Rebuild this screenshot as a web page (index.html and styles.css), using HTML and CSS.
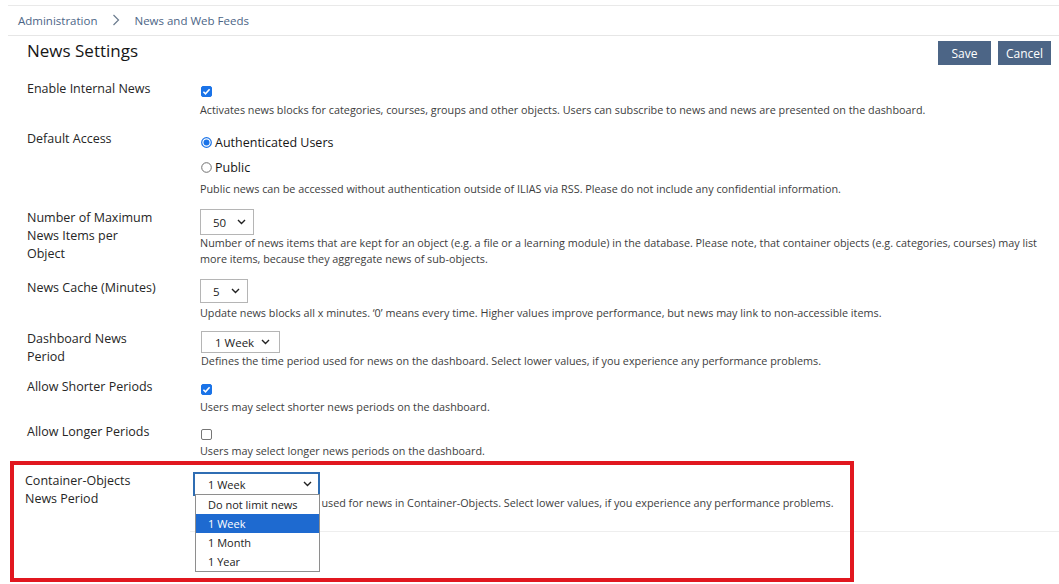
FILE: index.html
```html
<!DOCTYPE html>
<html lang="en">
<head>
<meta charset="utf-8">
<title>News Settings</title>
<link rel="stylesheet" href="styles.css">
</head>
<body>
<nav class="crumbs">
  <span class="crumb">Administration</span>
  <svg class="crumb-sep" width="8" height="12" viewBox="0 0 8 12"><path d="M1.5 1 L6.5 6 L1.5 11" fill="none" stroke="#6b7b8e" stroke-width="1.2"/></svg>
  <span class="crumb">News and Web Feeds</span>
</nav>

<div class="header">
  <h1 class="title">News Settings</h1>
  <div class="buttons">
    <button class="btn">Save</button>
    <button class="btn">Cancel</button>
  </div>
</div>

<div class="form">
  <div class="row r1">
    <div class="label">Enable Internal News</div>
    <div class="field">
      <div class="cb-line"><span class="cb checked"><svg width="11" height="11" viewBox="0 0 11 11"><path d="M2.4 5.7 L4.5 7.8 L8.6 3.3" fill="none" stroke="#fff" stroke-width="1.6"/></svg></span></div>
      <div class="desc">Activates news blocks for categories, courses, groups and other objects. Users can subscribe to news and news are presented on the dashboard.</div>
    </div>
  </div>

  <div class="row r2">
    <div class="label">Default Access</div>
    <div class="field">
      <div class="radio-line"><svg class="radio" width="11" height="11" viewBox="0 0 11 11"><circle cx="5.5" cy="5.5" r="4.8" fill="#fff" stroke="#1a73e8" stroke-width="1.2"/><circle cx="5.5" cy="5.5" r="3" fill="#1a73e8"/></svg><span class="radio-text">Authenticated Users</span></div>
      <div class="radio-line"><svg class="radio" width="11" height="11" viewBox="0 0 11 11"><circle cx="5.5" cy="5.5" r="4.8" fill="#fff" stroke="#6f6f6f" stroke-width="1"/></svg><span class="radio-text">Public</span></div>
      <div class="desc d-tight">Public news can be accessed without authentication outside of ILIAS via RSS. Please do not include any confidential information.</div>
    </div>
  </div>

  <div class="row r3">
    <div class="label">Number of Maximum News Items per Object</div>
    <div class="field">
      <div class="select s50"><span>50</span><svg class="chev" width="9" height="6" viewBox="0 0 9 6"><path d="M1 1 L4.5 4.5 L8 1" fill="none" stroke="#222" stroke-width="1.4"/></svg></div>
      <div class="desc">Number of news items that are kept for an object (e.g. a file or a learning module) in the database. Please note, that container objects (e.g. categories, courses) may list more items, because they aggregate news of sub-objects.</div>
    </div>
  </div>

  <div class="row r4">
    <div class="label">News Cache (Minutes)</div>
    <div class="field">
      <div class="select s5"><span>5</span><svg class="chev" width="9" height="6" viewBox="0 0 9 6"><path d="M1 1 L4.5 4.5 L8 1" fill="none" stroke="#222" stroke-width="1.4"/></svg></div>
      <div class="desc d-gap">Update news blocks all x minutes. ‘0’ means every time. Higher values improve performance, but news may link to non-accessible items.</div>
    </div>
  </div>

  <div class="row r5">
    <div class="label">Dashboard News Period</div>
    <div class="field">
      <div class="select sweek"><span>1 Week</span><svg class="chev" width="9" height="6" viewBox="0 0 9 6"><path d="M1 1 L4.5 4.5 L8 1" fill="none" stroke="#222" stroke-width="1.4"/></svg></div>
      <div class="desc">Defines the time period used for news on the dashboard. Select lower values, if you experience any performance problems.</div>
    </div>
  </div>

  <div class="row r6">
    <div class="label">Allow Shorter Periods</div>
    <div class="field">
      <div class="cb-line cb21"><span class="cb checked"><svg width="11" height="11" viewBox="0 0 11 11"><path d="M2.4 5.7 L4.5 7.8 L8.6 3.3" fill="none" stroke="#fff" stroke-width="1.6"/></svg></span></div>
      <div class="desc">Users may select shorter news periods on the dashboard.</div>
    </div>
  </div>

  <div class="row r7">
    <div class="label">Allow Longer Periods</div>
    <div class="field">
      <div class="cb-line cb20"><span class="cb"></span></div>
      <div class="desc">Users may select longer news periods on the dashboard.</div>
    </div>
  </div>

  <div class="row r8">
    <div class="label">Container-Objects News Period</div>
    <div class="field">
      <div class="select-wrap">
        <div class="select sfocus"><span>1 Week</span><svg class="chev" width="9" height="6" viewBox="0 0 9 6"><path d="M1 1 L4.5 4.5 L8 1" fill="none" stroke="#222" stroke-width="1.4"/></svg></div>
        <ul class="dropdown">
          <li>Do not limit news</li>
          <li class="sel">1 Week</li>
          <li>1 Month</li>
          <li>1 Year</li>
        </ul>
      </div>
      <div class="desc d-neg">Defines the time period used for news in Container-Objects. Select lower values, if you experience any performance problems.</div>
    </div>
  </div>

  <div class="form-footer"></div>
</div>

<div class="annotation"></div>
</body>
</html>
```

FILE: styles.css
```css
html, body {
  margin: 0;
  padding: 0;
  background: #fff;
}
body {
  font-family: "Open Sans", "Noto Sans", sans-serif;
  color: #1f1f1f;
  position: relative;
  width: 1059px;
  height: 584px;
  overflow: hidden;
}

.crumbs {
  margin: 5px 0 0 8px;
  height: 28px;
  border-top: 1px solid #e9e9e9;
  border-bottom: 1px solid #e6e6e6;
  display: flex;
  align-items: center;
  padding: 0 0 1px 10px;
  font-size: 11.5px;
  color: #4c6586;
}
.crumb-sep {
  margin: 0 14px 0 15px;
}

.header {
  display: flex;
  justify-content: space-between;
  align-items: flex-start;
  padding: 5px 8px 0 27px;
}
.title {
  margin: 0;
  font-size: 17px;
  font-weight: 400;
  line-height: 20px;
  color: #161616;
}
.buttons {
  display: flex;
  gap: 7px;
}
.btn {
  width: 53px;
  height: 24px;
  border: none;
  background: #4c6586;
  color: #fff;
  font-family: inherit;
  font-size: 12px;
  padding: 0;
}

.form {
  display: flex;
  flex-direction: column;
}
.row {
  display: grid;
  grid-template-columns: 173px 1fr;
  padding-left: 27px;
}
.label {
  font-size: 12.5px;
  line-height: 18px;
  color: #262626;
  max-width: 131px;
}
.field {
  display: flex;
  flex-direction: column;
  align-items: flex-start;
}
.desc {
  font-size: 10.8px;
  line-height: 16px;
  color: #3d3d3d;
}
.d-tight { margin-top: 1px; }
.d-gap { margin-top: 2px; }
.d-neg { margin-top: -1px; }

.r1 { margin-top: 15px; }
.r2 { margin-top: 12px; }
.r3 { margin-top: 12px; }
.r4 { margin-top: 12px; }
.r5 { margin-top: 10px; }
.r5 .label { margin-top: -1px; }
.r5 .field { padding-left: 1px; }
.r6 { margin-top: 9px; }
.r7 { margin-top: 8px; }
.r8 {
  margin-top: 13px;
  padding-left: 25px;
  grid-template-columns: 168px 1fr;
}
.r8 .desc { padding-left: 7px; }

.cb-line {
  height: 22px;
  display: flex;
  align-items: flex-start;
  padding-left: 1px;
}
.cb21 { height: 21px; }
.cb20 { height: 20px; }
.cb {
  margin-top: 6px;
  width: 11px;
  height: 11px;
  box-sizing: border-box;
  border: 1px solid #767676;
  border-radius: 2px;
  background: #fff;
  display: block;
  position: relative;
}
.cb.checked {
  background: #1a73e8;
  border-color: #1a73e8;
}
.cb.checked svg {
  position: absolute;
  left: -1px;
  top: -1px;
}

.radio-line {
  height: 25px;
  display: flex;
  align-items: center;
  padding-left: 1px;
}
.radio {
  margin-right: 3px;
  flex: none;
}
.radio-text {
  font-size: 12.5px;
  color: #161616;
}

.select {
  box-sizing: border-box;
  border: 1px solid #b5b5b5;
  background: #fff;
  display: flex;
  align-items: center;
  justify-content: space-between;
  font-size: 11.5px;
  color: #222;
}
.s50 { width: 54px; height: 26px; padding: 0 7px 0 12px; }
.s5 { width: 48px; height: 24px; padding: 0 7px 0 12px; }
.sweek { width: 79px; height: 22px; padding: 0 9px 0 13px; }
.select-wrap {
  position: relative;
}
.sfocus {
  width: 127px;
  height: 24px;
  border: 2px solid #2f6db3;
  padding: 0 6px 0 13px;
  font-size: 11px;
}
.dropdown {
  position: absolute;
  left: 2px;
  top: 22px;
  margin: 0;
  padding: 0;
  list-style: none;
  width: 125px;
  box-sizing: border-box;
  border: 1px solid #8e8e8e;
  background: #fff;
  z-index: 2;
}
.dropdown li {
  height: 19px;
  line-height: 19px;
  padding-left: 12px;
  font-size: 11px;
  color: #222;
}
.dropdown li.sel {
  background: #1e6ad0;
  color: #fff;
}

.form-footer {
  margin: 20px 0 0 190px;
  border-top: 1px solid #eeeeee;
}

.annotation {
  position: absolute;
  left: 10px;
  top: 461px;
  width: 844px;
  height: 121px;
  box-sizing: border-box;
  border: 4px solid #e1171f;
  pointer-events: none;
  z-index: 3;
}
```
